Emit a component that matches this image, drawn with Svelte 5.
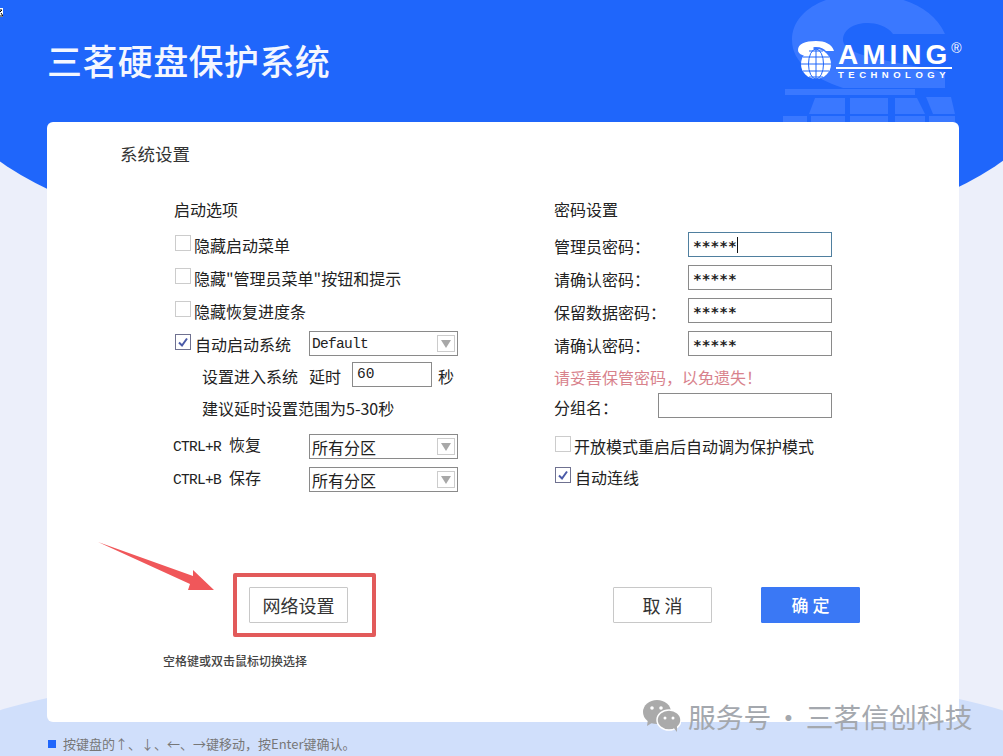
<script>
    const passwords = [
        { label: "管理员密码\uFF1A", value: "*****", focus: true },
        { label: "请确认密码\uFF1A", value: "*****" },
        { label: "保留数据密码\uFF1A", value: "*****" },
        { label: "请确认密码\uFF1A", value: "*****" },
    ];
    const hideOptions = ["隐藏启动菜单", "隐藏\"管理员菜单\"按钮和提示", "隐藏恢复进度条"];
    const shortcuts = [
        { key: "CTRL+R", name: "恢复" },
        { key: "CTRL+B", name: "保存" },
    ];
</script>

{#snippet check(on)}
    <span class="check" class:on>
        {#if on}
            <svg width="14" height="14" viewBox="0 0 14 14">
                <path d="M3 7.5 L6 10.5 L11 3.5" fill="none" stroke="#4a5aa8" stroke-width="2" />
            </svg>
        {/if}
    </span>
{/snippet}

{#snippet select(text, mono)}
    <div class="select" class:mono>
        <span>{text}</span>
        <i class="drop"><b></b></i>
    </div>
{/snippet}

<div class="page">
    <div class="top-bg"></div>
    <div class="bottom-bg"></div>
    <svg class="corner" width="3" height="9" viewBox="0 0 3 9">
        <rect width="3" height="9" fill="#fff" />
        <path d="M 0 2 H 2 L 0 4 M 1 5 L 3 8 H 0" fill="none" stroke="#000" stroke-width="1" />
    </svg>

    <svg class="big-logo" width="175" height="122" viewBox="0 0 175 122">
        <g fill="#3a78ff">
            <path fill-rule="evenodd" d="M 162 34 C 150 6 115 -6 80 -6 C 40 -6 9 12 9 40 C 9 62 30 78 60 88 L 162 88 L 162 72 L 100 60 C 80 56 60 50 60 40 C 60 30 70 23 85 23 C 92 23 105 26 110 34 Z" />
            <rect x="2" y="89" width="130" height="6" />
            <path d="M 32 98 H 62 V 114 H 26 Z" />
            <rect x="67" y="98" width="38" height="16" />
            <path d="M 112 98 H 134 L 142 114 H 112 Z" />
            <path d="M 143 97 H 168 L 172 114 H 150 Z" />
            <rect x="0" y="116" width="24" height="6" />
            <rect x="28" y="116" width="34" height="6" />
            <rect x="67" y="116" width="38" height="6" />
            <rect x="112" y="116" width="30" height="6" />
            <rect x="146" y="116" width="26" height="6" />
        </g>
    </svg>

    <header class="head">
        <h1>三茗硬盘保护系统</h1>
        <div class="logo">
            <svg class="globe" width="38" height="38" viewBox="0 0 38 38">
                <path d="M 37 10 C 35 3 28 0 19 0 C 8 0 1 3 1 9 C 1 14 8 15 14 16 L 30 16 L 20 9 C 15 8 15 6 19 6 C 24 6 27 8 29 10 Z" fill="#fff" />
                <circle cx="19" cy="23" r="15" fill="#fff" />
                <g fill="none" stroke="#1f66fb" stroke-width="1">
                    <ellipse cx="19" cy="23" rx="7.5" ry="15" />
                    <path d="M 19 8 V 38 M 4 23 H 34 M 6 16 H 32 M 6 30 H 32 M 12 10 H 26 M 12 36 H 26" />
                </g>
            </svg>
            <div class="brand">
                <div class="aming">AMING<sup>®</sup></div>
                <div class="tech">TECHNOLOGY</div>
            </div>
        </div>
    </header>

    <main class="card">
        <h2>系统设置</h2>
        <div class="cols">
            <section class="left">
                <h3>启动选项</h3>
                {#each hideOptions as opt}
                    <div class="row">{@render check(false)}<span>{opt}</span></div>
                {/each}
                <div class="row auto">
                    {@render check(true)}<span class="auto-label">自动启动系统</span>
                    {@render select("Default", true)}
                </div>
                <div class="row sub">
                    <span>设置进入系统</span><span class="delay">延时</span>
                    <div class="input small">60</div><span>秒</span>
                </div>
                <div class="row sub tip">建议延时设置范围为5-30秒</div>
                <div class="keys">
                    {#each shortcuts as s}
                        <div class="row key">
                            <span class="key-label">{s.key} <span class="key-name">{s.name}</span></span>
                            {@render select("所有分区", false)}
                        </div>
                    {/each}
                </div>
            </section>

            <section class="right">
                <h3>密码设置</h3>
                {#each passwords as p}
                    <div class="pw">
                        <span class="pw-label">{p.label}</span>
                        <div class="input pass" class:focus={p.focus}>{p.value}{#if p.focus}<em></em>{/if}</div>
                    </div>
                {/each}
                <div class="warn">请妥善保管密码&#xFF0C;以免遗失&#xFF01;</div>
                <div class="pw group">
                    <span class="pw-label">分组名&#xFF1A;</span>
                    <div class="input wide"></div>
                </div>
                <div class="row open">{@render check(false)}<span>开放模式重启后自动调为保护模式</span></div>
                <div class="row">{@render check(true)}<span class="auto-label">自动连线</span></div>
            </section>
        </div>

        <div class="actions">
            <div class="net-box"><button class="btn">网络设置</button></div>
            <div class="right-btns">
                <button class="btn cancel">取 消</button>
                <button class="btn ok">确 定</button>
            </div>
        </div>
        <p class="hint">空格键或双击鼠标切换选择</p>
    </main>

    <footer class="foot">
        <i class="square"></i>
        <span>按键盘的↑、↓、←、→键移动&#xFF0C;按Enter键确认。</span>
    </footer>

    <svg class="arrow" width="120" height="52" viewBox="0 0 120 52">
        <path d="M 1 2 L 96 36 L 96 30 L 117 50 L 91 50 L 93 44 Z" fill="#f0575a" />
    </svg>

    <div class="mark">
        <svg width="38" height="32" viewBox="0 0 38 32">
            <ellipse cx="14" cy="12" rx="14" ry="12" fill="#aaa" />
            <path d="M 5 19 L 4 26 L 12 21 Z" fill="#aaa" />
            <ellipse cx="26" cy="20" rx="12" ry="10" fill="#aaa" stroke="#fff" stroke-width="1.5" />
            <path d="M 30 27 L 34 32 L 34 25 Z" fill="#aaa" />
            <circle cx="9" cy="8" r="1.8" fill="#fff" />
            <circle cx="18" cy="8" r="1.8" fill="#fff" />
            <circle cx="22" cy="18" r="1.5" fill="#fff" />
            <circle cx="30" cy="18" r="1.5" fill="#fff" />
        </svg>
        <span>服务号 · 三茗信创科技</span>
    </div>
</div>

<style>
    :global(body) {
        margin: 0;
        background: #eceffa;
    }
    .page {
        position: relative;
        width: 1003px;
        height: 756px;
        overflow: hidden;
        background: #eceffa;
        font-family: "Noto Sans CJK SC", "Noto Sans", sans-serif;
        color: #222;
    }
    .top-bg {
        position: absolute;
        left: -59px;
        top: -122px;
        width: 1120px;
        height: 392px;
        border-radius: 50%;
        background: #1f66fb;
    }
    .bottom-bg {
        position: absolute;
        left: -59px;
        top: 662px;
        width: 1120px;
        height: 174px;
        border-radius: 50%;
        background: #d0dffb;
    }
    .corner {
        position: absolute;
        left: 0;
        top: 8px;
    }
    .big-logo {
        position: absolute;
        left: 783px;
        top: 0;
    }
    .head {
        position: relative;
        height: 122px;
        display: flex;
        justify-content: space-between;
        padding: 0 51px 0 47px;
        box-sizing: border-box;
    }
    h1 {
        margin: 36px 0 0;
        font-size: 35px;
        line-height: 48px;
        font-weight: 500;
        letter-spacing: 0.4px;
        color: #f4f7ff;
    }
    .logo {
        display: flex;
        margin-top: 41px;
        color: #fff;
        font-family: "Liberation Sans", sans-serif;
        font-weight: 700;
    }
    .globe {
        margin-right: 1px;
    }
    .brand {
        width: 116px;
        padding-top: 2px;
    }
    .aming {
        font-size: 28px;
        line-height: 24px;
        letter-spacing: 4px;
        border-bottom: 2px solid #fff;
        height: 24px;
        padding-left: 2px;
        white-space: nowrap;
    }
    .aming sup {
        font-size: 14px;
        line-height: 0;
        font-weight: 400;
        vertical-align: 11px;
        letter-spacing: 0;
    }
    .tech {
        font-size: 9.5px;
        line-height: 8px;
        letter-spacing: 4.5px;
        margin-top: 2px;
        padding-left: 2px;
        white-space: nowrap;
    }
    .card {
        position: relative;
        margin-left: 47px;
        width: 912px;
        height: 600px;
        background: #fff;
        border-radius: 6px;
        box-sizing: border-box;
        padding: 20px 0 0 73px;
    }
    h2 {
        margin: 0;
        font-size: 17.5px;
        line-height: 24px;
        font-weight: 400;
        color: #333;
    }
    h3 {
        margin: 0 0 7px;
        font-size: 16px;
        line-height: 24px;
        font-weight: 400;
    }
    .left h3 {
        padding-left: 1px;
    }
    .cols {
        display: flex;
        margin: 31px 0 0 53px;
        font-size: 16px;
    }
    .left {
        width: 381px;
    }
    .right {
        width: 278px;
    }
    .row {
        display: flex;
        align-items: center;
        height: 33px;
        white-space: nowrap;
    }
    .check {
        width: 16px;
        height: 16px;
        margin: -4px 3px 0 2px;
        box-sizing: border-box;
        border: 1px solid #ccc;
        flex: none;
    }
    .right .check {
        margin-left: 1px;
    }
    .check.on {
        border-color: #6f7190;
    }
    .check svg {
        display: block;
    }
    .auto-label {
        margin-left: 1px;
    }
    .auto {
        width: 285px;
    }
    .select {
        width: 149px;
        height: 25px;
        box-sizing: border-box;
        border: 1px solid #8a8a8a;
        padding-left: 2px;
        display: flex;
        align-items: center;
        justify-content: space-between;
        font-size: 16px;
    }
    .select.mono {
        font-family: "Liberation Mono", monospace;
        font-size: 14.5px;
        letter-spacing: -0.7px;
    }
    .auto .select {
        margin-left: auto;
    }
    .drop {
        width: 18px;
        height: 17px;
        border: 1px solid #ccc;
        margin-right: 2px;
        box-sizing: border-box;
        display: flex;
        justify-content: center;
        padding-top: 4px;
    }
    .drop b {
        width: 0;
        height: 0;
        border-left: 5px solid transparent;
        border-right: 5px solid transparent;
        border-top: 8px solid #a8a8a8;
    }
    .sub {
        padding-left: 29px;
        height: 31px;
    }
    .tip {
        height: 33px;
    }
    .delay {
        margin-left: 11px;
    }
    .input {
        box-sizing: border-box;
        border: 1px solid #8a8a8a;
        height: 25px;
        line-height: 23px;
        font-family: "Liberation Mono", monospace;
        font-size: 14.5px;
        padding-left: 4px;
    }
    .small {
        width: 80px;
        margin: -3px 6px 0 11px;
    }
    .keys {
        margin-top: 6px;
    }
    .key-label {
        width: 136px;
        margin-top: -6px;
        font-family: "Liberation Mono", "Noto Sans CJK SC", monospace;
        font-size: 14.5px;
        letter-spacing: -0.7px;
    }
    .key-name {
        font-family: "Noto Sans CJK SC", sans-serif;
        font-size: 16px;
        letter-spacing: 0;
    }
    .pw {
        display: flex;
        justify-content: space-between;
        align-items: center;
        height: 33px;
    }
    .pw-label {
        padding-top: 2px;
    }
    .pass {
        width: 144px;
        font-family: "DejaVu Sans Mono", monospace;
        font-size: 14.5px;
        line-height: 27px;
        font-weight: 700;
        position: relative;
    }
    .pass.focus {
        border-color: #4f7f9f;
    }
    .pass em {
        position: absolute;
        left: 48px;
        top: 4px;
        width: 1px;
        height: 16px;
        background: #111;
    }
    .warn {
        color: #d8828c;
        height: 32px;
        line-height: 35px;
    }
    .group {
        height: 27px;
    }
    .wide {
        width: 174px;
    }
    .open {
        margin-top: 12px;
        height: 29px;
    }
    .actions {
        position: absolute;
        left: 186px;
        top: 451px;
        width: 627px;
        display: flex;
        justify-content: space-between;
    }
    .net-box {
        width: 143px;
        height: 64px;
        box-sizing: border-box;
        border: 4px solid #e25a5a;
        border-radius: 2px;
        padding: 10px 0 0 12px;
    }
    .right-btns {
        display: flex;
        gap: 49px;
        padding-top: 14px;
    }
    .btn {
        width: 99px;
        height: 36px;
        box-sizing: border-box;
        background: #fff;
        border: 1px solid #c8c8c8;
        border-radius: 1px;
        font-family: inherit;
        font-size: 18px;
        line-height: 32px;
        color: #333;
        padding: 0;
    }
    .ok {
        background: #3a78f5;
        border-color: #3a78f5;
        color: #fff;
        font-size: 17px;
        font-weight: 500;
    }
    .hint {
        position: absolute;
        left: 116px;
        top: 530px;
        margin: 0;
        font-size: 12px;
        line-height: 18px;
        font-weight: 500;
        color: #444;
    }
    .foot {
        position: relative;
        display: flex;
        align-items: center;
        height: 34px;
        box-sizing: border-box;
        padding-top: 9px;
        margin-left: 48px;
        font-size: 13px;
        color: #777;
    }
    .square {
        width: 8px;
        height: 8px;
        background: #1f66fb;
        margin-right: 7px;
    }
    .arrow {
        position: absolute;
        left: 97px;
        top: 540px;
    }
    .mark {
        position: absolute;
        left: 643px;
        top: 698px;
        display: flex;
        align-items: center;
        gap: 7px;
        font-size: 27.8px;
        word-spacing: -3px;
        line-height: 36px;
        color: #a4a8ae;
        white-space: nowrap;
    }
</style>
